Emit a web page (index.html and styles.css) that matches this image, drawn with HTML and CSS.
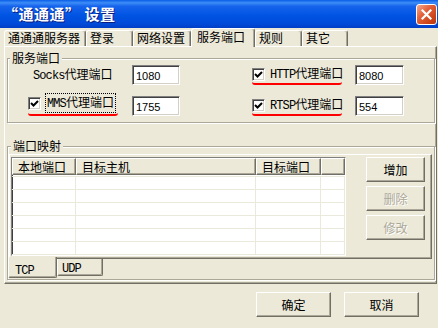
FILE: index.html
```html
<!DOCTYPE html>
<html lang="zh-CN">
<head>
  <meta charset="UTF-8" />
  <title>“通通通” 设置</title>
  <link rel="stylesheet" href="styles.css">
</head>
<body>
  <div class="window">
    <div class="titlebar">
      <span class="title">“通通通” 设置</span>
      <span class="close">
        <svg width="11" height="11" viewBox="0 0 11 11"><path d="M1.5 1.5 L9.5 9.5 M9.5 1.5 L1.5 9.5" stroke="#fff" stroke-width="2.2" stroke-linecap="square"/></svg>
      </span>
    </div>

    <div class="tabs">
      <span class="tab w1">通通通服务器</span>
      <span class="tab w2">登录</span>
      <span class="tab w3">网络设置</span>
      <span class="tab active">服务端口</span>
      <span class="tab w5">规则</span>
      <span class="tab w6">其它</span>
    </div>

    <div class="page">
      <fieldset class="group">
        <legend>服务端口</legend>
        <div class="ports">
          <span class="lbl plain"><span class="en">Socks</span>代理端口</span>
          <span class="field">1080</span>
          <span class="mark right">
            <span class="check"><svg width="9" height="9" viewBox="0 0 9 9"><path d="M1 4 L3.5 6.5 L8 2" fill="none" stroke="#000" stroke-width="2"/></svg></span>
            <span class="lbl"><span class="en">HTTP</span>代理端口</span>
          </span>
          <span class="field">8080</span>

          <span class="mark">
            <span class="check"><svg width="9" height="9" viewBox="0 0 9 9"><path d="M1 4 L3.5 6.5 L8 2" fill="none" stroke="#000" stroke-width="2"/></svg></span>
            <span class="lbl focus"><span class="en">MMS</span>代理端口</span>
          </span>
          <span class="field">1755</span>
          <span class="mark right">
            <span class="check"><svg width="9" height="9" viewBox="0 0 9 9"><path d="M1 4 L3.5 6.5 L8 2" fill="none" stroke="#000" stroke-width="2"/></svg></span>
            <span class="lbl"><span class="en">RTSP</span>代理端口</span>
          </span>
          <span class="field">554</span>
        </div>
      </fieldset>

      <fieldset class="group mapping">
        <legend>端口映射</legend>
        <div class="inner-page">
          <div class="list">
            <div class="head">
              <span class="hcell">本地端口</span>
              <span class="hcell">目标主机</span>
              <span class="hcell">目标端口</span>
              <span class="hcell"></span>
            </div>
            <div class="rows">
              <div class="row"><span></span><span></span><span></span><span></span></div>
              <div class="row"><span></span><span></span><span></span><span></span></div>
              <div class="row"><span></span><span></span><span></span><span></span></div>
              <div class="row"><span></span><span></span><span></span><span></span></div>
              <div class="row"><span></span><span></span><span></span><span></span></div>
              <div class="row"><span></span><span></span><span></span><span></span></div>
            </div>
          </div>
          <div class="side-buttons">
            <span class="btn small">增加</span>
            <span class="btn small disabled">删除</span>
            <span class="btn small disabled">修改</span>
          </div>
        </div>
        <div class="subtabs">
          <span class="subtab active"><span class="en">TCP</span></span>
          <span class="subtab"><span class="en">UDP</span></span>
        </div>
      </fieldset>
    </div>

    <div class="footer">
      <span class="btn">确定</span>
      <span class="btn">取消</span>
    </div>
  </div>
</body>
</html>
```

FILE: styles.css
```css
body {
  margin: 0;
  padding: 0;
  font-family: "Noto Sans CJK SC", sans-serif;
  font-size: 12px;
  line-height: 14px;
  color: #000;
}

.window {
  width: 438px;
  height: 328px;
  overflow: hidden;
  background: #ece9d8;
}

/* title bar */
.titlebar {
  height: 28px;
  display: flex;
  align-items: center;
  padding: 0 1px 0 3px;
  background: linear-gradient(#0a5ee8 0%, #3d8df7 10%, #1764ec 22%, #0054e3 55%, #004ad9 85%, #003ec4 100%);
}

.title {
  color: #fff;
  font-weight: bold;
  font-size: 15px;
  line-height: 18px;
  letter-spacing: 0.5px;
  text-shadow: 1px 1px 0 #0a1c80;
}

.close {
  margin-left: auto;
  width: 21px;
  height: 21px;
  box-sizing: border-box;
  border: 1px solid #fff;
  border-radius: 3px;
  background: linear-gradient(135deg, #f4a98f 0%, #e2603a 40%, #cc4519 75%, #b8380e 100%);
  display: flex;
  align-items: center;
  justify-content: center;
}

/* top tabs */
.tabs {
  display: flex;
  align-items: flex-end;
  height: 19px;
  padding-left: 4px;
  margin-bottom: -1px;
}

.tab {
  box-sizing: border-box;
  height: 16px;
  margin-bottom: 1px;
  padding-left: 3px;
  border: 1px solid #fff;
  border-bottom: none;
  border-right-color: #716f64;
  border-radius: 3px 3px 0 0;
  box-shadow: inset -1px 0 #aca899;
  background: #ece9d8;
  white-space: nowrap;
}

.w1 { width: 82px; }
.w2 { width: 47px; }
.w3 { width: 58px; }
.w5 { width: 47px; }
.w6 { width: 46px; }

.tab.active {
  position: relative;
  width: 64px;
  height: 19px;
  margin-bottom: 0;
  padding-left: 5px;
  padding-top: 1px;
}

/* tab page */
.page {
  margin: 0 1px 0 4px;
  padding: 4px 0 3px;
  border: 1px solid #fff;
  border-right-color: #716f64;
  border-bottom-color: #716f64;
  box-shadow: inset -1px -1px #aca899;
}

.group {
  margin: 0 1px 0 2px;
  padding: 0;
  min-width: 0;
  border: 1px solid #aca899;
  box-shadow: inset 1px 1px #fff, 1px 1px #fff;
}

.group legend {
  margin-left: 2px;
  padding: 0 2px;
  line-height: 14px;
  background: #ece9d8;
}

.ports {
  display: grid;
  grid-template-columns: 104px 48px 72px 103px 49px;
  grid-template-rows: 20px 20px;
  row-gap: 11px;
  padding: 0 0 6px 20px;
}

.lbl {
  white-space: nowrap;
}

.lbl.plain {
  align-self: center;
  padding-left: 5px;
}

.en {
  font-family: "Liberation Mono", monospace;
  font-size: 12px;
  letter-spacing: -0.9px;
}

.field {
  box-sizing: border-box;
  height: 20px;
  padding: 3px 0 0 3px;
  background: #fff;
  border: 1px solid;
  border-color: #808080 #fff #fff #808080;
  box-shadow: inset 1px 1px #404040, inset -1px -1px #d4d0c8;
  font-family: "Liberation Sans", sans-serif;
  font-size: 11px;
  line-height: 14px;
}

.mark {
  align-self: end;
  justify-self: start;
  display: flex;
  align-items: center;
  gap: 4px;
  width: 90px;
  box-sizing: border-box;
  padding-bottom: 1px;
  border-bottom: 2px solid #f00;
  border-radius: 0 0 3px 3px;
}

.mark.right {
  grid-column: 4;
  gap: 5px;
}

.check {
  box-sizing: border-box;
  width: 13px;
  height: 13px;
  flex: none;
  display: flex;
  align-items: center;
  justify-content: center;
  background: #fff;
  border: 1px solid;
  border-color: #808080 #fff #fff #808080;
  box-shadow: inset 1px 1px #404040, inset -1px -1px #d4d0c8;
}

.lbl.focus {
  padding: 1px 1px;
  border: 1px dotted #000;
}

/* port mapping group */
.mapping {
  margin-top: 16px;
  padding: 1px 2px 1px 1px;
}

.inner-page {
  display: flex;
  padding: 2px 1px 2px 1px;
  border: 1px solid #fff;
  border-right-color: #716f64;
  border-bottom-color: #716f64;
  box-shadow: inset -1px -1px #aca899;
}

.list {
  width: 335px;
  height: 99px;
  box-sizing: border-box;
  overflow: hidden;
  background: #fff;
  border: 1px solid;
  border-color: #808080 #fff #fff #808080;
  box-shadow: inset 1px 1px #404040;
}

.head,
.row {
  display: grid;
  grid-template-columns: 64px 180px 65px 1fr;
}

.hcell {
  box-sizing: border-box;
  height: 17px;
  padding-left: 5px;
  line-height: 15px;
  background: #ece9d8;
  border: 1px solid;
  border-color: #fff #716f64 #716f64 #fff;
  box-shadow: inset -1px -1px #aca899;
  white-space: nowrap;
}

.rows {
  margin-top: 1px;
  border-top: 1px solid #ebe9dc;
}

.row {
  height: 13px;
  box-sizing: border-box;
  border-bottom: 1px solid #ebe9dc;
}

.row span {
  border-right: 1px solid #ebe9dc;
}

.side-buttons {
  display: flex;
  flex-direction: column;
  gap: 4px;
  margin-left: 20px;
}

.btn {
  box-sizing: border-box;
  width: 75px;
  height: 25px;
  display: flex;
  align-items: center;
  justify-content: center;
  background: #ece9d8;
  border: 1px solid;
  border-color: #fff #716f64 #716f64 #fff;
  box-shadow: inset -1px -1px #aca899;
}

.btn.small {
  width: 59px;
}

.btn.disabled {
  color: #aca899;
  text-shadow: 1px 1px 0 #fff;
}

.subtabs {
  display: flex;
  align-items: flex-start;
  margin: -2px 0 0 -1px;
}

.subtab {
  box-sizing: border-box;
  width: 46px;
  height: 17px;
  margin-top: 2px;
  padding: 1px 0 0 4px;
  background: #ece9d8;
  border: 1px solid #716f64;
  border-top: none;
  border-left-color: #fff;
  border-radius: 0 0 2px 2px;
  box-shadow: inset -1px -1px #aca899;
}

.subtab.active {
  position: relative;
  width: 49px;
  height: 21px;
  margin-top: 0;
  padding: 5px 0 0 6px;
}

/* dialog buttons */
.footer {
  display: flex;
  justify-content: flex-end;
  gap: 13px;
  padding: 8px 19px 0 0;
}
```
